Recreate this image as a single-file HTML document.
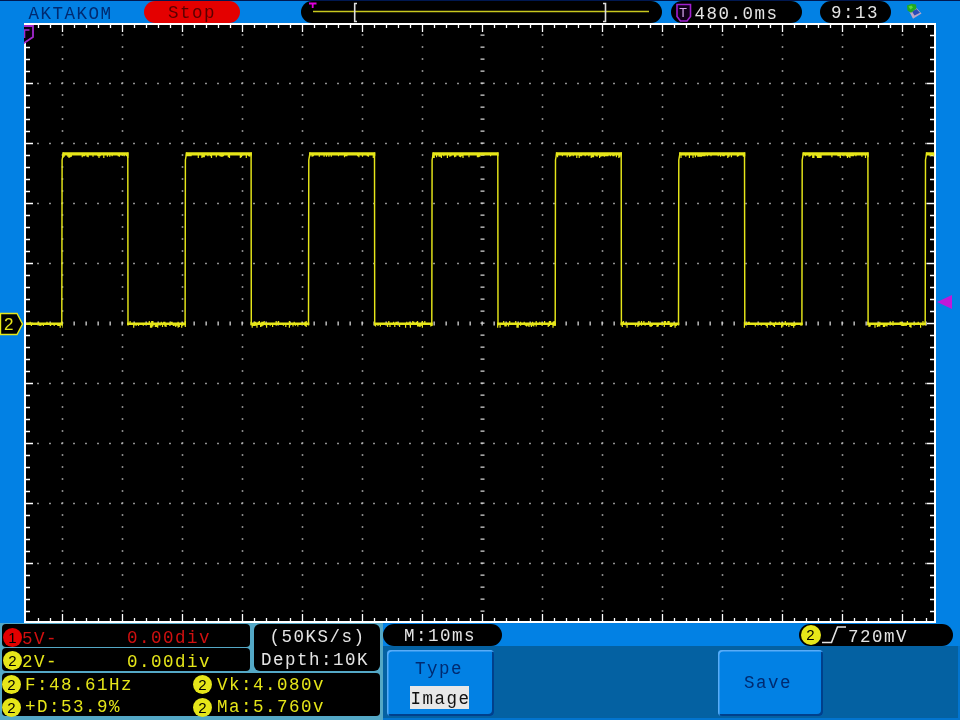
<!DOCTYPE html>
<html lang="en">
<head>
<meta charset="utf-8">
<title>AKTAKOM oscilloscope</title>
<style>
html,body{margin:0;padding:0;}
body{width:960px;height:720px;overflow:hidden;background:#0281e4;position:relative;}
#scr{position:absolute;left:0;top:0;width:960px;height:720px;overflow:hidden;will-change:transform;filter:blur(0.4px);
 font-family:"Liberation Mono","DejaVu Sans Mono",monospace;font-size:17.5px;letter-spacing:1.5px;line-height:20px;}
.abs{position:absolute;}
.plot{position:absolute;left:0;top:0;}
.t{position:absolute;white-space:pre;height:20px;}
.pill{position:absolute;background:#000;border-radius:11px;}
.box{position:absolute;background:#000;border-radius:4px;}
.circ{position:absolute;width:19px;height:19px;border-radius:50%;background:#e6e619;color:#000;
 font-family:"Liberation Sans",sans-serif;font-size:15px;letter-spacing:0;line-height:19px;text-align:center;}
.y{color:#e6e619;} .w{color:#e4e4e4;} .r{color:#d01010;} .n{color:#002a70;}
.btn{position:absolute;background:#0281e4;border-radius:4px;box-shadow:inset 1.5px 1.5px 0 #58acf8, inset -2px -2px 0 #00408c;}
</style>
</head>
<body>
<div id="scr">
<div class="abs" style="left:0;top:0;width:960px;height:1.2px;background:#001850;"></div>
<svg class="plot" width="960" height="720" viewBox="0 0 960 720"><rect x="24" y="23" width="912" height="600" fill="#000"/><line x1="37.2" y1="83.5" x2="934" y2="83.5" stroke="#b4b4b4" stroke-width="1.6" stroke-dasharray="1.6 10.4"/><line x1="37.2" y1="143.5" x2="934" y2="143.5" stroke="#b4b4b4" stroke-width="1.6" stroke-dasharray="1.6 10.4"/><line x1="37.2" y1="203.5" x2="934" y2="203.5" stroke="#b4b4b4" stroke-width="1.6" stroke-dasharray="1.6 10.4"/><line x1="37.2" y1="263.5" x2="934" y2="263.5" stroke="#b4b4b4" stroke-width="1.6" stroke-dasharray="1.6 10.4"/><line x1="37.2" y1="383.5" x2="934" y2="383.5" stroke="#b4b4b4" stroke-width="1.6" stroke-dasharray="1.6 10.4"/><line x1="37.2" y1="443.5" x2="934" y2="443.5" stroke="#b4b4b4" stroke-width="1.6" stroke-dasharray="1.6 10.4"/><line x1="37.2" y1="503.5" x2="934" y2="503.5" stroke="#b4b4b4" stroke-width="1.6" stroke-dasharray="1.6 10.4"/><line x1="37.2" y1="563.5" x2="934" y2="563.5" stroke="#b4b4b4" stroke-width="1.6" stroke-dasharray="1.6 10.4"/><line x1="62.5" y1="34.2" x2="62.5" y2="620" stroke="#b4b4b4" stroke-width="1.6" stroke-dasharray="1.6 10.4"/><line x1="122.5" y1="34.2" x2="122.5" y2="620" stroke="#b4b4b4" stroke-width="1.6" stroke-dasharray="1.6 10.4"/><line x1="182.5" y1="34.2" x2="182.5" y2="620" stroke="#b4b4b4" stroke-width="1.6" stroke-dasharray="1.6 10.4"/><line x1="242.5" y1="34.2" x2="242.5" y2="620" stroke="#b4b4b4" stroke-width="1.6" stroke-dasharray="1.6 10.4"/><line x1="302.5" y1="34.2" x2="302.5" y2="620" stroke="#b4b4b4" stroke-width="1.6" stroke-dasharray="1.6 10.4"/><line x1="362.5" y1="34.2" x2="362.5" y2="620" stroke="#b4b4b4" stroke-width="1.6" stroke-dasharray="1.6 10.4"/><line x1="422.5" y1="34.2" x2="422.5" y2="620" stroke="#b4b4b4" stroke-width="1.6" stroke-dasharray="1.6 10.4"/><line x1="542.5" y1="34.2" x2="542.5" y2="620" stroke="#b4b4b4" stroke-width="1.6" stroke-dasharray="1.6 10.4"/><line x1="602.5" y1="34.2" x2="602.5" y2="620" stroke="#b4b4b4" stroke-width="1.6" stroke-dasharray="1.6 10.4"/><line x1="662.5" y1="34.2" x2="662.5" y2="620" stroke="#b4b4b4" stroke-width="1.6" stroke-dasharray="1.6 10.4"/><line x1="722.5" y1="34.2" x2="722.5" y2="620" stroke="#b4b4b4" stroke-width="1.6" stroke-dasharray="1.6 10.4"/><line x1="782.5" y1="34.2" x2="782.5" y2="620" stroke="#b4b4b4" stroke-width="1.6" stroke-dasharray="1.6 10.4"/><line x1="842.5" y1="34.2" x2="842.5" y2="620" stroke="#b4b4b4" stroke-width="1.6" stroke-dasharray="1.6 10.4"/><line x1="902.5" y1="34.2" x2="902.5" y2="620" stroke="#b4b4b4" stroke-width="1.6" stroke-dasharray="1.6 10.4"/><line x1="37.5" y1="323.5" x2="934" y2="323.5" stroke="#d8d8d8" stroke-width="4" stroke-dasharray="1.3 10.7"/><line x1="482.5" y1="34.5" x2="482.5" y2="620" stroke="#d8d8d8" stroke-width="4" stroke-dasharray="1.3 10.7"/><rect x="25" y="24" width="910" height="598" fill="none" stroke="#fff" stroke-width="2"/><path d="M38.5 25v3 M38.5 621v-3 M50.5 25v3 M50.5 621v-3 M62.5 25v7 M62.5 621v-7 M74.5 25v3 M74.5 621v-3 M86.5 25v3 M86.5 621v-3 M98.5 25v3 M98.5 621v-3 M110.5 25v3 M110.5 621v-3 M122.5 25v7 M122.5 621v-7 M134.5 25v3 M134.5 621v-3 M146.5 25v3 M146.5 621v-3 M158.5 25v3 M158.5 621v-3 M170.5 25v3 M170.5 621v-3 M182.5 25v7 M182.5 621v-7 M194.5 25v3 M194.5 621v-3 M206.5 25v3 M206.5 621v-3 M218.5 25v3 M218.5 621v-3 M230.5 25v3 M230.5 621v-3 M242.5 25v7 M242.5 621v-7 M254.5 25v3 M254.5 621v-3 M266.5 25v3 M266.5 621v-3 M278.5 25v3 M278.5 621v-3 M290.5 25v3 M290.5 621v-3 M302.5 25v7 M302.5 621v-7 M314.5 25v3 M314.5 621v-3 M326.5 25v3 M326.5 621v-3 M338.5 25v3 M338.5 621v-3 M350.5 25v3 M350.5 621v-3 M362.5 25v7 M362.5 621v-7 M374.5 25v3 M374.5 621v-3 M386.5 25v3 M386.5 621v-3 M398.5 25v3 M398.5 621v-3 M410.5 25v3 M410.5 621v-3 M422.5 25v7 M422.5 621v-7 M434.5 25v3 M434.5 621v-3 M446.5 25v3 M446.5 621v-3 M458.5 25v3 M458.5 621v-3 M470.5 25v3 M470.5 621v-3 M482.5 25v7 M482.5 621v-7 M494.5 25v3 M494.5 621v-3 M506.5 25v3 M506.5 621v-3 M518.5 25v3 M518.5 621v-3 M530.5 25v3 M530.5 621v-3 M542.5 25v7 M542.5 621v-7 M554.5 25v3 M554.5 621v-3 M566.5 25v3 M566.5 621v-3 M578.5 25v3 M578.5 621v-3 M590.5 25v3 M590.5 621v-3 M602.5 25v7 M602.5 621v-7 M614.5 25v3 M614.5 621v-3 M626.5 25v3 M626.5 621v-3 M638.5 25v3 M638.5 621v-3 M650.5 25v3 M650.5 621v-3 M662.5 25v7 M662.5 621v-7 M674.5 25v3 M674.5 621v-3 M686.5 25v3 M686.5 621v-3 M698.5 25v3 M698.5 621v-3 M710.5 25v3 M710.5 621v-3 M722.5 25v7 M722.5 621v-7 M734.5 25v3 M734.5 621v-3 M746.5 25v3 M746.5 621v-3 M758.5 25v3 M758.5 621v-3 M770.5 25v3 M770.5 621v-3 M782.5 25v7 M782.5 621v-7 M794.5 25v3 M794.5 621v-3 M806.5 25v3 M806.5 621v-3 M818.5 25v3 M818.5 621v-3 M830.5 25v3 M830.5 621v-3 M842.5 25v7 M842.5 621v-7 M854.5 25v3 M854.5 621v-3 M866.5 25v3 M866.5 621v-3 M878.5 25v3 M878.5 621v-3 M890.5 25v3 M890.5 621v-3 M902.5 25v7 M902.5 621v-7 M914.5 25v3 M914.5 621v-3 M926.5 25v3 M926.5 621v-3 M26 35.5h4 M934 35.5h-4 M26 47.5h4 M934 47.5h-4 M26 59.5h4 M934 59.5h-4 M26 71.5h4 M934 71.5h-4 M26 83.5h7 M934 83.5h-7 M26 95.5h4 M934 95.5h-4 M26 107.5h4 M934 107.5h-4 M26 119.5h4 M934 119.5h-4 M26 131.5h4 M934 131.5h-4 M26 143.5h7 M934 143.5h-7 M26 155.5h4 M934 155.5h-4 M26 167.5h4 M934 167.5h-4 M26 179.5h4 M934 179.5h-4 M26 191.5h4 M934 191.5h-4 M26 203.5h7 M934 203.5h-7 M26 215.5h4 M934 215.5h-4 M26 227.5h4 M934 227.5h-4 M26 239.5h4 M934 239.5h-4 M26 251.5h4 M934 251.5h-4 M26 263.5h7 M934 263.5h-7 M26 275.5h4 M934 275.5h-4 M26 287.5h4 M934 287.5h-4 M26 299.5h4 M934 299.5h-4 M26 311.5h4 M934 311.5h-4 M26 323.5h7 M934 323.5h-7 M26 335.5h4 M934 335.5h-4 M26 347.5h4 M934 347.5h-4 M26 359.5h4 M934 359.5h-4 M26 371.5h4 M934 371.5h-4 M26 383.5h7 M934 383.5h-7 M26 395.5h4 M934 395.5h-4 M26 407.5h4 M934 407.5h-4 M26 419.5h4 M934 419.5h-4 M26 431.5h4 M934 431.5h-4 M26 443.5h7 M934 443.5h-7 M26 455.5h4 M934 455.5h-4 M26 467.5h4 M934 467.5h-4 M26 479.5h4 M934 479.5h-4 M26 491.5h4 M934 491.5h-4 M26 503.5h7 M934 503.5h-7 M26 515.5h4 M934 515.5h-4 M26 527.5h4 M934 527.5h-4 M26 539.5h4 M934 539.5h-4 M26 551.5h4 M934 551.5h-4 M26 563.5h7 M934 563.5h-7 M26 575.5h4 M934 575.5h-4 M26 587.5h4 M934 587.5h-4 M26 599.5h4 M934 599.5h-4 M26 611.5h4 M934 611.5h-4" stroke="#fff" stroke-width="1.3" fill="none"/><path d="M26.0 322.6 L27.2 322.6 L27.2 322.6 L28.4 322.6 L28.4 322.6 L29.6 322.6 L29.6 321.8 L30.8 321.8 L30.8 322.6 L32.0 322.6 L32.0 322.6 L33.2 322.6 L33.2 322.6 L34.4 322.6 L34.4 322.6 L35.6 322.6 L35.6 322.6 L36.8 322.6 L36.8 322.6 L38.0 322.6 L38.0 321.8 L39.2 321.8 L39.2 322.6 L40.4 322.6 L40.4 322.6 L41.6 322.6 L41.6 322.6 L42.8 322.6 L42.8 322.6 L44.0 322.6 L44.0 322.6 L45.2 322.6 L45.2 322.6 L46.4 322.6 L46.4 321.8 L47.6 321.8 L47.6 322.6 L48.8 322.6 L48.8 322.6 L50.0 322.6 L50.0 322.6 L51.2 322.6 L51.2 322.6 L52.4 322.6 L52.4 322.6 L53.6 322.6 L53.6 322.6 L54.8 322.6 L54.8 322.6 L56.0 322.6 L56.0 322.6 L57.2 322.6 L57.2 322.6 L58.4 322.6 L58.4 322.6 L59.6 322.6 L59.6 322.6 L60.8 322.6 L60.8 321.8 L62.0 321.8 L62.0 322.6 L62.6 322.6 L62.6 327.8 L62.0 327.8 L62.0 325.1 L60.8 325.1 L60.8 327.8 L59.6 327.8 L59.6 325.9 L58.4 325.9 L58.4 325.9 L57.2 325.9 L57.2 325.1 L56.0 325.1 L56.0 325.1 L54.8 325.1 L54.8 325.9 L53.6 325.9 L53.6 325.1 L52.4 325.1 L52.4 325.1 L51.2 325.1 L51.2 325.9 L50.0 325.9 L50.0 325.1 L48.8 325.1 L48.8 325.1 L47.6 325.1 L47.6 325.1 L46.4 325.1 L46.4 325.1 L45.2 325.1 L45.2 325.1 L44.0 325.1 L44.0 325.9 L42.8 325.9 L42.8 325.1 L41.6 325.1 L41.6 325.8 L40.4 325.8 L40.4 325.9 L39.2 325.9 L39.2 325.1 L38.0 325.1 L38.0 325.1 L36.8 325.1 L36.8 325.1 L35.6 325.1 L35.6 325.1 L34.4 325.1 L34.4 325.1 L33.2 325.1 L33.2 325.1 L32.0 325.1 L32.0 325.9 L30.8 325.9 L30.8 325.1 L29.6 325.1 L29.6 325.1 L28.4 325.1 L28.4 325.1 L27.2 325.1 L27.2 325.1 L26.0 325.1Z M62.4 152.3 L63.6 152.3 L63.6 152.3 L64.8 152.3 L64.8 152.3 L66.0 152.3 L66.0 152.3 L67.2 152.3 L67.2 152.3 L68.4 152.3 L68.4 152.3 L69.6 152.3 L69.6 152.3 L70.8 152.3 L70.8 152.3 L72.0 152.3 L72.0 152.3 L73.2 152.3 L73.2 152.3 L74.4 152.3 L74.4 152.3 L75.6 152.3 L75.6 152.3 L76.8 152.3 L76.8 152.3 L78.0 152.3 L78.0 152.3 L79.2 152.3 L79.2 152.3 L80.4 152.3 L80.4 152.3 L81.6 152.3 L81.6 152.3 L82.8 152.3 L82.8 152.3 L84.0 152.3 L84.0 152.3 L85.2 152.3 L85.2 152.3 L86.4 152.3 L86.4 152.3 L87.6 152.3 L87.6 152.3 L88.8 152.3 L88.8 152.3 L90.0 152.3 L90.0 152.3 L91.2 152.3 L91.2 152.3 L92.4 152.3 L92.4 152.3 L93.6 152.3 L93.6 152.3 L94.8 152.3 L94.8 152.3 L96.0 152.3 L96.0 152.3 L97.2 152.3 L97.2 152.3 L98.4 152.3 L98.4 152.3 L99.6 152.3 L99.6 152.3 L100.8 152.3 L100.8 152.3 L102.0 152.3 L102.0 152.3 L103.2 152.3 L103.2 152.3 L104.4 152.3 L104.4 152.3 L105.6 152.3 L105.6 152.3 L106.8 152.3 L106.8 152.3 L108.0 152.3 L108.0 152.3 L109.2 152.3 L109.2 152.3 L110.4 152.3 L110.4 152.3 L111.6 152.3 L111.6 152.3 L112.8 152.3 L112.8 152.3 L114.0 152.3 L114.0 152.3 L115.2 152.3 L115.2 152.3 L116.4 152.3 L116.4 152.3 L117.6 152.3 L117.6 152.3 L118.8 152.3 L118.8 152.3 L120.0 152.3 L120.0 152.3 L121.2 152.3 L121.2 152.3 L122.4 152.3 L122.4 152.3 L123.6 152.3 L123.6 152.3 L124.8 152.3 L124.8 152.3 L126.0 152.3 L126.0 152.3 L127.2 152.3 L127.2 152.3 L128.4 152.3 L128.4 152.3 L128.6 152.3 L128.6 155.5 L128.4 155.5 L128.4 158.1 L127.2 158.1 L127.2 156.3 L126.0 156.3 L126.0 155.5 L124.8 155.5 L124.8 156.3 L123.6 156.3 L123.6 155.5 L122.4 155.5 L122.4 155.5 L121.2 155.5 L121.2 155.5 L120.0 155.5 L120.0 156.8 L118.8 156.8 L118.8 156.3 L117.6 156.3 L117.6 155.5 L116.4 155.5 L116.4 155.5 L115.2 155.5 L115.2 155.5 L114.0 155.5 L114.0 155.5 L112.8 155.5 L112.8 156.2 L111.6 156.2 L111.6 155.5 L110.4 155.5 L110.4 156.8 L109.2 156.8 L109.2 155.5 L108.0 155.5 L108.0 156.8 L106.8 156.8 L106.8 155.5 L105.6 155.5 L105.6 155.5 L104.4 155.5 L104.4 158.1 L103.2 158.1 L103.2 155.5 L102.0 155.5 L102.0 155.5 L100.8 155.5 L100.8 156.2 L99.6 156.2 L99.6 158.1 L98.4 158.1 L98.4 156.3 L97.2 156.3 L97.2 155.5 L96.0 155.5 L96.0 155.5 L94.8 155.5 L94.8 155.5 L93.6 155.5 L93.6 156.8 L92.4 156.8 L92.4 155.5 L91.2 155.5 L91.2 155.5 L90.0 155.5 L90.0 155.5 L88.8 155.5 L88.8 157.3 L87.6 157.3 L87.6 156.8 L86.4 156.8 L86.4 155.5 L85.2 155.5 L85.2 156.3 L84.0 156.3 L84.0 156.3 L82.8 156.3 L82.8 157.3 L81.6 157.3 L81.6 155.5 L80.4 155.5 L80.4 155.5 L79.2 155.5 L79.2 155.5 L78.0 155.5 L78.0 155.5 L76.8 155.5 L76.8 155.5 L75.6 155.5 L75.6 155.5 L74.4 155.5 L74.4 155.5 L73.2 155.5 L73.2 155.5 L72.0 155.5 L72.0 156.8 L70.8 156.8 L70.8 157.3 L69.6 157.3 L69.6 158.1 L68.4 158.1 L68.4 156.8 L67.2 156.8 L67.2 155.5 L66.0 155.5 L66.0 155.5 L64.8 155.5 L64.8 156.8 L63.6 156.8 L63.6 158.1 L62.4 158.1Z M127.1 322.6 L128.3 322.6 L128.3 322.6 L129.5 322.6 L129.5 321.0 L130.7 321.0 L130.7 322.6 L131.9 322.6 L131.9 322.6 L133.1 322.6 L133.1 322.6 L134.3 322.6 L134.3 322.6 L135.5 322.6 L135.5 322.6 L136.7 322.6 L136.7 322.6 L137.9 322.6 L137.9 322.6 L139.1 322.6 L139.1 322.6 L140.3 322.6 L140.3 322.6 L141.5 322.6 L141.5 322.6 L142.7 322.6 L142.7 322.6 L143.9 322.6 L143.9 322.6 L145.1 322.6 L145.1 322.6 L146.3 322.6 L146.3 322.6 L147.5 322.6 L147.5 322.6 L148.7 322.6 L148.7 321.0 L149.9 321.0 L149.9 322.6 L151.1 322.6 L151.1 321.0 L152.3 321.0 L152.3 321.0 L153.5 321.0 L153.5 322.6 L154.7 322.6 L154.7 322.6 L155.9 322.6 L155.9 322.6 L157.1 322.6 L157.1 322.6 L158.3 322.6 L158.3 322.6 L159.5 322.6 L159.5 322.6 L160.7 322.6 L160.7 321.8 L161.9 321.8 L161.9 322.6 L163.1 322.6 L163.1 321.8 L164.3 321.8 L164.3 321.8 L165.5 321.8 L165.5 322.6 L166.7 322.6 L166.7 322.6 L167.9 322.6 L167.9 322.6 L169.1 322.6 L169.1 322.6 L170.3 322.6 L170.3 321.8 L171.5 321.8 L171.5 321.8 L172.7 321.8 L172.7 322.6 L173.9 322.6 L173.9 322.6 L175.1 322.6 L175.1 322.6 L176.3 322.6 L176.3 322.6 L177.5 322.6 L177.5 321.8 L178.7 321.8 L178.7 322.6 L179.9 322.6 L179.9 322.6 L181.1 322.6 L181.1 322.6 L182.3 322.6 L182.3 322.6 L183.5 322.6 L183.5 322.6 L184.7 322.6 L184.7 321.0 L185.9 321.0 L185.9 322.6 L185.9 322.6 L185.9 325.1 L185.9 325.1 L185.9 327.0 L184.7 327.0 L184.7 325.1 L183.5 325.1 L183.5 325.8 L182.3 325.8 L182.3 327.8 L181.1 327.8 L181.1 325.1 L179.9 325.1 L179.9 327.0 L178.7 327.0 L178.7 327.8 L177.5 327.8 L177.5 325.8 L176.3 325.8 L176.3 327.0 L175.1 327.0 L175.1 325.8 L173.9 325.8 L173.9 325.9 L172.7 325.9 L172.7 325.1 L171.5 325.1 L171.5 325.1 L170.3 325.1 L170.3 325.8 L169.1 325.8 L169.1 325.1 L167.9 325.1 L167.9 325.1 L166.7 325.1 L166.7 327.0 L165.5 327.0 L165.5 326.4 L164.3 326.4 L164.3 325.1 L163.1 325.1 L163.1 327.0 L161.9 327.0 L161.9 325.1 L160.7 325.1 L160.7 325.8 L159.5 325.8 L159.5 325.1 L158.3 325.1 L158.3 327.8 L157.1 327.8 L157.1 327.0 L155.9 327.0 L155.9 327.0 L154.7 327.0 L154.7 325.1 L153.5 325.1 L153.5 326.4 L152.3 326.4 L152.3 327.8 L151.1 327.8 L151.1 327.8 L149.9 327.8 L149.9 325.1 L148.7 325.1 L148.7 325.1 L147.5 325.1 L147.5 325.1 L146.3 325.1 L146.3 325.1 L145.1 325.1 L145.1 325.1 L143.9 325.1 L143.9 325.8 L142.7 325.8 L142.7 325.1 L141.5 325.1 L141.5 325.1 L140.3 325.1 L140.3 325.1 L139.1 325.1 L139.1 325.9 L137.9 325.9 L137.9 325.1 L136.7 325.1 L136.7 325.9 L135.5 325.9 L135.5 325.1 L134.3 325.1 L134.3 327.8 L133.1 327.8 L133.1 325.1 L131.9 325.1 L131.9 325.1 L130.7 325.1 L130.7 325.1 L129.5 325.1 L129.5 325.1 L128.3 325.1 L128.3 325.1 L127.1 325.1Z M185.7 152.3 L186.9 152.3 L186.9 152.3 L188.1 152.3 L188.1 152.3 L189.3 152.3 L189.3 152.3 L190.5 152.3 L190.5 152.3 L191.7 152.3 L191.7 152.3 L192.9 152.3 L192.9 152.3 L194.1 152.3 L194.1 152.3 L195.3 152.3 L195.3 152.3 L196.5 152.3 L196.5 152.3 L197.7 152.3 L197.7 152.3 L198.9 152.3 L198.9 152.3 L200.1 152.3 L200.1 152.3 L201.3 152.3 L201.3 152.3 L202.5 152.3 L202.5 152.3 L203.7 152.3 L203.7 152.3 L204.9 152.3 L204.9 152.3 L206.1 152.3 L206.1 152.3 L207.3 152.3 L207.3 152.3 L208.5 152.3 L208.5 152.3 L209.7 152.3 L209.7 152.3 L210.9 152.3 L210.9 152.3 L212.1 152.3 L212.1 152.3 L213.3 152.3 L213.3 152.3 L214.5 152.3 L214.5 152.3 L215.7 152.3 L215.7 152.3 L216.9 152.3 L216.9 152.3 L218.1 152.3 L218.1 152.3 L219.3 152.3 L219.3 152.3 L220.5 152.3 L220.5 152.3 L221.7 152.3 L221.7 152.3 L222.9 152.3 L222.9 152.3 L224.1 152.3 L224.1 152.3 L225.3 152.3 L225.3 152.3 L226.5 152.3 L226.5 152.3 L227.7 152.3 L227.7 152.3 L228.9 152.3 L228.9 152.3 L230.1 152.3 L230.1 152.3 L231.3 152.3 L231.3 152.3 L232.5 152.3 L232.5 152.3 L233.7 152.3 L233.7 152.3 L234.9 152.3 L234.9 152.3 L236.1 152.3 L236.1 152.3 L237.3 152.3 L237.3 152.3 L238.5 152.3 L238.5 152.3 L239.7 152.3 L239.7 152.3 L240.9 152.3 L240.9 152.3 L242.1 152.3 L242.1 152.3 L243.3 152.3 L243.3 152.3 L244.5 152.3 L244.5 152.3 L245.7 152.3 L245.7 152.3 L246.9 152.3 L246.9 152.3 L248.1 152.3 L248.1 152.3 L249.3 152.3 L249.3 152.3 L250.5 152.3 L250.5 152.3 L251.7 152.3 L251.7 152.3 L251.9 152.3 L251.9 158.1 L251.7 158.1 L251.7 155.5 L250.5 155.5 L250.5 156.8 L249.3 156.8 L249.3 156.2 L248.1 156.2 L248.1 155.5 L246.9 155.5 L246.9 158.1 L245.7 158.1 L245.7 155.5 L244.5 155.5 L244.5 155.5 L243.3 155.5 L243.3 155.5 L242.1 155.5 L242.1 157.3 L240.9 157.3 L240.9 158.1 L239.7 158.1 L239.7 155.5 L238.5 155.5 L238.5 155.5 L237.3 155.5 L237.3 155.5 L236.1 155.5 L236.1 155.5 L234.9 155.5 L234.9 155.5 L233.7 155.5 L233.7 155.5 L232.5 155.5 L232.5 155.5 L231.3 155.5 L231.3 155.5 L230.1 155.5 L230.1 158.1 L228.9 158.1 L228.9 157.3 L227.7 157.3 L227.7 155.5 L226.5 155.5 L226.5 155.5 L225.3 155.5 L225.3 155.5 L224.1 155.5 L224.1 156.2 L222.9 156.2 L222.9 156.8 L221.7 156.8 L221.7 156.8 L220.5 156.8 L220.5 156.2 L219.3 156.2 L219.3 155.5 L218.1 155.5 L218.1 155.5 L216.9 155.5 L216.9 157.3 L215.7 157.3 L215.7 155.5 L214.5 155.5 L214.5 155.5 L213.3 155.5 L213.3 155.5 L212.1 155.5 L212.1 158.1 L210.9 158.1 L210.9 156.3 L209.7 156.3 L209.7 155.5 L208.5 155.5 L208.5 156.3 L207.3 156.3 L207.3 155.5 L206.1 155.5 L206.1 155.5 L204.9 155.5 L204.9 157.3 L203.7 157.3 L203.7 157.3 L202.5 157.3 L202.5 158.1 L201.3 158.1 L201.3 155.5 L200.1 155.5 L200.1 155.5 L198.9 155.5 L198.9 158.1 L197.7 158.1 L197.7 155.5 L196.5 155.5 L196.5 155.5 L195.3 155.5 L195.3 155.5 L194.1 155.5 L194.1 155.5 L192.9 155.5 L192.9 155.5 L191.7 155.5 L191.7 156.3 L190.5 156.3 L190.5 156.2 L189.3 156.2 L189.3 156.2 L188.1 156.2 L188.1 156.2 L186.9 156.2 L186.9 156.2 L185.7 156.2Z M250.4 321.8 L251.6 321.8 L251.6 322.6 L252.8 322.6 L252.8 322.6 L254.0 322.6 L254.0 321.8 L255.2 321.8 L255.2 321.8 L256.4 321.8 L256.4 322.6 L257.6 322.6 L257.6 321.8 L258.8 321.8 L258.8 321.0 L260.0 321.0 L260.0 322.6 L261.2 322.6 L261.2 321.8 L262.4 321.8 L262.4 321.8 L263.6 321.8 L263.6 321.0 L264.8 321.0 L264.8 322.6 L266.0 322.6 L266.0 322.6 L267.2 322.6 L267.2 322.6 L268.4 322.6 L268.4 322.6 L269.6 322.6 L269.6 322.6 L270.8 322.6 L270.8 322.6 L272.0 322.6 L272.0 322.6 L273.2 322.6 L273.2 322.6 L274.4 322.6 L274.4 322.6 L275.6 322.6 L275.6 321.0 L276.8 321.0 L276.8 322.6 L278.0 322.6 L278.0 321.0 L279.2 321.0 L279.2 322.6 L280.4 322.6 L280.4 322.6 L281.6 322.6 L281.6 322.6 L282.8 322.6 L282.8 322.6 L284.0 322.6 L284.0 322.6 L285.2 322.6 L285.2 322.6 L286.4 322.6 L286.4 322.6 L287.6 322.6 L287.6 322.6 L288.8 322.6 L288.8 321.0 L290.0 321.0 L290.0 322.6 L291.2 322.6 L291.2 322.6 L292.4 322.6 L292.4 322.6 L293.6 322.6 L293.6 321.8 L294.8 321.8 L294.8 322.6 L296.0 322.6 L296.0 322.6 L297.2 322.6 L297.2 322.6 L298.4 322.6 L298.4 322.6 L299.6 322.6 L299.6 322.6 L300.8 322.6 L300.8 322.6 L302.0 322.6 L302.0 322.6 L303.2 322.6 L303.2 322.6 L304.4 322.6 L304.4 321.8 L305.6 321.8 L305.6 321.0 L306.8 321.0 L306.8 322.6 L308.0 322.6 L308.0 322.6 L309.2 322.6 L309.2 322.6 L309.3 322.6 L309.3 325.1 L309.2 325.1 L309.2 325.1 L308.0 325.1 L308.0 325.1 L306.8 325.1 L306.8 327.0 L305.6 327.0 L305.6 325.9 L304.4 325.9 L304.4 325.1 L303.2 325.1 L303.2 325.1 L302.0 325.1 L302.0 325.1 L300.8 325.1 L300.8 325.1 L299.6 325.1 L299.6 325.1 L298.4 325.1 L298.4 326.4 L297.2 326.4 L297.2 325.1 L296.0 325.1 L296.0 325.8 L294.8 325.8 L294.8 325.1 L293.6 325.1 L293.6 326.4 L292.4 326.4 L292.4 325.1 L291.2 325.1 L291.2 325.1 L290.0 325.1 L290.0 327.8 L288.8 327.8 L288.8 325.1 L287.6 325.1 L287.6 325.1 L286.4 325.1 L286.4 327.0 L285.2 327.0 L285.2 325.1 L284.0 325.1 L284.0 325.8 L282.8 325.8 L282.8 325.1 L281.6 325.1 L281.6 325.1 L280.4 325.1 L280.4 325.1 L279.2 325.1 L279.2 325.1 L278.0 325.1 L278.0 325.1 L276.8 325.1 L276.8 325.8 L275.6 325.8 L275.6 325.1 L274.4 325.1 L274.4 325.1 L273.2 325.1 L273.2 327.0 L272.0 327.0 L272.0 325.1 L270.8 325.1 L270.8 325.8 L269.6 325.8 L269.6 325.1 L268.4 325.1 L268.4 325.1 L267.2 325.1 L267.2 327.8 L266.0 327.8 L266.0 325.1 L264.8 325.1 L264.8 325.1 L263.6 325.1 L263.6 325.8 L262.4 325.8 L262.4 326.4 L261.2 326.4 L261.2 327.0 L260.0 327.0 L260.0 325.1 L258.8 325.1 L258.8 325.1 L257.6 325.1 L257.6 327.8 L256.4 327.8 L256.4 325.8 L255.2 325.8 L255.2 325.9 L254.0 325.9 L254.0 325.9 L252.8 325.9 L252.8 327.8 L251.6 327.8 L251.6 325.1 L250.4 325.1Z M309.1 152.3 L310.3 152.3 L310.3 152.3 L311.5 152.3 L311.5 152.3 L312.7 152.3 L312.7 152.3 L313.9 152.3 L313.9 152.3 L315.1 152.3 L315.1 152.3 L316.3 152.3 L316.3 152.3 L317.5 152.3 L317.5 152.3 L318.7 152.3 L318.7 152.3 L319.9 152.3 L319.9 152.3 L321.1 152.3 L321.1 152.3 L322.3 152.3 L322.3 152.3 L323.5 152.3 L323.5 152.3 L324.7 152.3 L324.7 152.3 L325.9 152.3 L325.9 152.3 L327.1 152.3 L327.1 152.3 L328.3 152.3 L328.3 152.3 L329.5 152.3 L329.5 152.3 L330.7 152.3 L330.7 152.3 L331.9 152.3 L331.9 152.3 L333.1 152.3 L333.1 152.3 L334.3 152.3 L334.3 152.3 L335.5 152.3 L335.5 152.3 L336.7 152.3 L336.7 152.3 L337.9 152.3 L337.9 152.3 L339.1 152.3 L339.1 152.3 L340.3 152.3 L340.3 152.3 L341.5 152.3 L341.5 152.3 L342.7 152.3 L342.7 152.3 L343.9 152.3 L343.9 152.3 L345.1 152.3 L345.1 152.3 L346.3 152.3 L346.3 152.3 L347.5 152.3 L347.5 152.3 L348.7 152.3 L348.7 152.3 L349.9 152.3 L349.9 152.3 L351.1 152.3 L351.1 152.3 L352.3 152.3 L352.3 152.3 L353.5 152.3 L353.5 152.3 L354.7 152.3 L354.7 152.3 L355.9 152.3 L355.9 152.3 L357.1 152.3 L357.1 152.3 L358.3 152.3 L358.3 152.3 L359.5 152.3 L359.5 152.3 L360.7 152.3 L360.7 152.3 L361.9 152.3 L361.9 152.3 L363.1 152.3 L363.1 152.3 L364.3 152.3 L364.3 152.3 L365.5 152.3 L365.5 152.3 L366.7 152.3 L366.7 152.3 L367.9 152.3 L367.9 152.3 L369.1 152.3 L369.1 152.3 L370.3 152.3 L370.3 152.3 L371.5 152.3 L371.5 152.3 L372.7 152.3 L372.7 152.3 L373.9 152.3 L373.9 152.3 L375.1 152.3 L375.1 152.3 L375.3 152.3 L375.3 156.2 L375.1 156.2 L375.1 155.5 L373.9 155.5 L373.9 158.1 L372.7 158.1 L372.7 155.5 L371.5 155.5 L371.5 155.5 L370.3 155.5 L370.3 155.5 L369.1 155.5 L369.1 156.8 L367.9 156.8 L367.9 156.2 L366.7 156.2 L366.7 155.5 L365.5 155.5 L365.5 155.5 L364.3 155.5 L364.3 155.5 L363.1 155.5 L363.1 156.8 L361.9 156.8 L361.9 155.5 L360.7 155.5 L360.7 155.5 L359.5 155.5 L359.5 157.3 L358.3 157.3 L358.3 156.3 L357.1 156.3 L357.1 155.5 L355.9 155.5 L355.9 155.5 L354.7 155.5 L354.7 155.5 L353.5 155.5 L353.5 155.5 L352.3 155.5 L352.3 155.5 L351.1 155.5 L351.1 155.5 L349.9 155.5 L349.9 155.5 L348.7 155.5 L348.7 155.5 L347.5 155.5 L347.5 156.2 L346.3 156.2 L346.3 156.2 L345.1 156.2 L345.1 157.3 L343.9 157.3 L343.9 155.5 L342.7 155.5 L342.7 155.5 L341.5 155.5 L341.5 155.5 L340.3 155.5 L340.3 155.5 L339.1 155.5 L339.1 156.2 L337.9 156.2 L337.9 155.5 L336.7 155.5 L336.7 155.5 L335.5 155.5 L335.5 155.5 L334.3 155.5 L334.3 155.5 L333.1 155.5 L333.1 155.5 L331.9 155.5 L331.9 156.8 L330.7 156.8 L330.7 155.5 L329.5 155.5 L329.5 156.8 L328.3 156.8 L328.3 155.5 L327.1 155.5 L327.1 156.8 L325.9 156.8 L325.9 155.5 L324.7 155.5 L324.7 156.8 L323.5 156.8 L323.5 155.5 L322.3 155.5 L322.3 155.5 L321.1 155.5 L321.1 155.5 L319.9 155.5 L319.9 156.8 L318.7 156.8 L318.7 155.5 L317.5 155.5 L317.5 155.5 L316.3 155.5 L316.3 155.5 L315.1 155.5 L315.1 155.5 L313.9 155.5 L313.9 156.3 L312.7 156.3 L312.7 156.8 L311.5 156.8 L311.5 155.5 L310.3 155.5 L310.3 156.8 L309.1 156.8Z M373.8 321.8 L375.0 321.8 L375.0 322.6 L376.2 322.6 L376.2 322.6 L377.4 322.6 L377.4 322.6 L378.6 322.6 L378.6 322.6 L379.8 322.6 L379.8 322.6 L381.0 322.6 L381.0 322.6 L382.2 322.6 L382.2 322.6 L383.4 322.6 L383.4 322.6 L384.6 322.6 L384.6 322.6 L385.8 322.6 L385.8 322.6 L387.0 322.6 L387.0 322.6 L388.2 322.6 L388.2 321.0 L389.4 321.0 L389.4 322.6 L390.6 322.6 L390.6 322.6 L391.8 322.6 L391.8 322.6 L393.0 322.6 L393.0 321.8 L394.2 321.8 L394.2 322.6 L395.4 322.6 L395.4 321.8 L396.6 321.8 L396.6 321.8 L397.8 321.8 L397.8 322.6 L399.0 322.6 L399.0 322.6 L400.2 322.6 L400.2 322.6 L401.4 322.6 L401.4 322.6 L402.6 322.6 L402.6 322.6 L403.8 322.6 L403.8 322.6 L405.0 322.6 L405.0 322.6 L406.2 322.6 L406.2 321.8 L407.4 321.8 L407.4 322.6 L408.6 322.6 L408.6 321.8 L409.8 321.8 L409.8 322.6 L411.0 322.6 L411.0 322.6 L412.2 322.6 L412.2 321.0 L413.4 321.0 L413.4 321.8 L414.6 321.8 L414.6 322.6 L415.8 322.6 L415.8 321.8 L417.0 321.8 L417.0 321.0 L418.2 321.0 L418.2 322.6 L419.4 322.6 L419.4 322.6 L420.6 322.6 L420.6 322.6 L421.8 322.6 L421.8 321.0 L423.0 321.0 L423.0 322.6 L424.2 322.6 L424.2 321.0 L425.4 321.0 L425.4 322.6 L426.6 322.6 L426.6 322.6 L427.8 322.6 L427.8 322.6 L429.0 322.6 L429.0 322.6 L430.2 322.6 L430.2 322.6 L431.4 322.6 L431.4 322.6 L432.6 322.6 L432.6 322.6 L432.7 322.6 L432.7 325.1 L432.6 325.1 L432.6 325.9 L431.4 325.9 L431.4 326.4 L430.2 326.4 L430.2 325.1 L429.0 325.1 L429.0 325.1 L427.8 325.1 L427.8 325.1 L426.6 325.1 L426.6 325.1 L425.4 325.1 L425.4 325.1 L424.2 325.1 L424.2 325.1 L423.0 325.1 L423.0 327.8 L421.8 327.8 L421.8 325.8 L420.6 325.8 L420.6 327.0 L419.4 327.0 L419.4 326.4 L418.2 326.4 L418.2 326.4 L417.0 326.4 L417.0 325.1 L415.8 325.1 L415.8 325.1 L414.6 325.1 L414.6 325.1 L413.4 325.1 L413.4 325.1 L412.2 325.1 L412.2 325.1 L411.0 325.1 L411.0 327.8 L409.8 327.8 L409.8 325.1 L408.6 325.1 L408.6 325.1 L407.4 325.1 L407.4 325.1 L406.2 325.1 L406.2 327.8 L405.0 327.8 L405.0 325.1 L403.8 325.1 L403.8 325.1 L402.6 325.1 L402.6 325.1 L401.4 325.1 L401.4 325.1 L400.2 325.1 L400.2 327.0 L399.0 327.0 L399.0 325.1 L397.8 325.1 L397.8 325.1 L396.6 325.1 L396.6 325.1 L395.4 325.1 L395.4 327.0 L394.2 327.0 L394.2 325.1 L393.0 325.1 L393.0 325.1 L391.8 325.1 L391.8 325.1 L390.6 325.1 L390.6 327.0 L389.4 327.0 L389.4 325.1 L388.2 325.1 L388.2 327.0 L387.0 327.0 L387.0 325.1 L385.8 325.1 L385.8 325.1 L384.6 325.1 L384.6 325.1 L383.4 325.1 L383.4 325.1 L382.2 325.1 L382.2 325.1 L381.0 325.1 L381.0 326.4 L379.8 326.4 L379.8 325.1 L378.6 325.1 L378.6 325.9 L377.4 325.9 L377.4 325.1 L376.2 325.1 L376.2 326.4 L375.0 326.4 L375.0 325.1 L373.8 325.1Z M432.4 152.3 L433.6 152.3 L433.6 152.3 L434.8 152.3 L434.8 152.3 L436.0 152.3 L436.0 152.3 L437.2 152.3 L437.2 152.3 L438.4 152.3 L438.4 152.3 L439.6 152.3 L439.6 152.3 L440.8 152.3 L440.8 152.3 L442.0 152.3 L442.0 152.3 L443.2 152.3 L443.2 152.3 L444.4 152.3 L444.4 152.3 L445.6 152.3 L445.6 152.3 L446.8 152.3 L446.8 152.3 L448.0 152.3 L448.0 152.3 L449.2 152.3 L449.2 152.3 L450.4 152.3 L450.4 152.3 L451.6 152.3 L451.6 152.3 L452.8 152.3 L452.8 152.3 L454.0 152.3 L454.0 152.3 L455.2 152.3 L455.2 152.3 L456.4 152.3 L456.4 152.3 L457.6 152.3 L457.6 152.3 L458.8 152.3 L458.8 152.3 L460.0 152.3 L460.0 152.3 L461.2 152.3 L461.2 152.3 L462.4 152.3 L462.4 152.3 L463.6 152.3 L463.6 152.3 L464.8 152.3 L464.8 152.3 L466.0 152.3 L466.0 152.3 L467.2 152.3 L467.2 152.3 L468.4 152.3 L468.4 152.3 L469.6 152.3 L469.6 152.3 L470.8 152.3 L470.8 152.3 L472.0 152.3 L472.0 152.3 L473.2 152.3 L473.2 152.3 L474.4 152.3 L474.4 152.3 L475.6 152.3 L475.6 152.3 L476.8 152.3 L476.8 152.3 L478.0 152.3 L478.0 152.3 L479.2 152.3 L479.2 152.3 L480.4 152.3 L480.4 152.3 L481.6 152.3 L481.6 152.3 L482.8 152.3 L482.8 152.3 L484.0 152.3 L484.0 152.3 L485.2 152.3 L485.2 152.3 L486.4 152.3 L486.4 152.3 L487.6 152.3 L487.6 152.3 L488.8 152.3 L488.8 152.3 L490.0 152.3 L490.0 152.3 L491.2 152.3 L491.2 152.3 L492.4 152.3 L492.4 152.3 L493.6 152.3 L493.6 152.3 L494.8 152.3 L494.8 152.3 L496.0 152.3 L496.0 152.3 L497.2 152.3 L497.2 152.3 L498.4 152.3 L498.4 152.3 L498.6 152.3 L498.6 155.5 L498.4 155.5 L498.4 156.2 L497.2 156.2 L497.2 155.5 L496.0 155.5 L496.0 155.5 L494.8 155.5 L494.8 155.5 L493.6 155.5 L493.6 155.5 L492.4 155.5 L492.4 155.5 L491.2 155.5 L491.2 156.2 L490.0 156.2 L490.0 155.5 L488.8 155.5 L488.8 155.5 L487.6 155.5 L487.6 155.5 L486.4 155.5 L486.4 155.5 L485.2 155.5 L485.2 155.5 L484.0 155.5 L484.0 155.5 L482.8 155.5 L482.8 155.5 L481.6 155.5 L481.6 155.5 L480.4 155.5 L480.4 156.8 L479.2 156.8 L479.2 157.3 L478.0 157.3 L478.0 157.3 L476.8 157.3 L476.8 155.5 L475.6 155.5 L475.6 155.5 L474.4 155.5 L474.4 155.5 L473.2 155.5 L473.2 155.5 L472.0 155.5 L472.0 155.5 L470.8 155.5 L470.8 155.5 L469.6 155.5 L469.6 157.3 L468.4 157.3 L468.4 155.5 L467.2 155.5 L467.2 155.5 L466.0 155.5 L466.0 155.5 L464.8 155.5 L464.8 155.5 L463.6 155.5 L463.6 158.1 L462.4 158.1 L462.4 156.2 L461.2 156.2 L461.2 157.3 L460.0 157.3 L460.0 156.8 L458.8 156.8 L458.8 155.5 L457.6 155.5 L457.6 155.5 L456.4 155.5 L456.4 156.8 L455.2 156.8 L455.2 157.3 L454.0 157.3 L454.0 155.5 L452.8 155.5 L452.8 155.5 L451.6 155.5 L451.6 156.2 L450.4 156.2 L450.4 156.8 L449.2 156.8 L449.2 155.5 L448.0 155.5 L448.0 158.1 L446.8 158.1 L446.8 155.5 L445.6 155.5 L445.6 155.5 L444.4 155.5 L444.4 156.2 L443.2 156.2 L443.2 155.5 L442.0 155.5 L442.0 158.1 L440.8 158.1 L440.8 156.8 L439.6 156.8 L439.6 156.8 L438.4 156.8 L438.4 155.5 L437.2 155.5 L437.2 157.3 L436.0 157.3 L436.0 155.5 L434.8 155.5 L434.8 158.1 L433.6 158.1 L433.6 158.1 L432.4 158.1Z M497.1 322.6 L498.3 322.6 L498.3 322.6 L499.5 322.6 L499.5 322.6 L500.7 322.6 L500.7 322.6 L501.9 322.6 L501.9 322.6 L503.1 322.6 L503.1 321.0 L504.3 321.0 L504.3 322.6 L505.5 322.6 L505.5 322.6 L506.7 322.6 L506.7 322.6 L507.9 322.6 L507.9 322.6 L509.1 322.6 L509.1 321.0 L510.3 321.0 L510.3 322.6 L511.5 322.6 L511.5 322.6 L512.7 322.6 L512.7 322.6 L513.9 322.6 L513.9 322.6 L515.1 322.6 L515.1 321.0 L516.4 321.0 L516.4 322.6 L517.6 322.6 L517.6 322.6 L518.8 322.6 L518.8 322.6 L520.0 322.6 L520.0 321.8 L521.2 321.8 L521.2 322.6 L522.4 322.6 L522.4 322.6 L523.6 322.6 L523.6 321.8 L524.8 321.8 L524.8 322.6 L526.0 322.6 L526.0 322.6 L527.2 322.6 L527.2 322.6 L528.4 322.6 L528.4 322.6 L529.6 322.6 L529.6 322.6 L530.8 322.6 L530.8 322.6 L532.0 322.6 L532.0 321.8 L533.2 321.8 L533.2 322.6 L534.4 322.6 L534.4 322.6 L535.6 322.6 L535.6 321.0 L536.8 321.0 L536.8 322.6 L538.0 322.6 L538.0 322.6 L539.2 322.6 L539.2 321.8 L540.4 321.8 L540.4 322.6 L541.6 322.6 L541.6 322.6 L542.8 322.6 L542.8 322.6 L544.0 322.6 L544.0 321.0 L545.2 321.0 L545.2 322.6 L546.4 322.6 L546.4 322.6 L547.6 322.6 L547.6 322.6 L548.8 322.6 L548.8 321.0 L550.0 321.0 L550.0 321.0 L551.2 321.0 L551.2 322.6 L552.4 322.6 L552.4 321.8 L553.6 321.8 L553.6 321.0 L554.8 321.0 L554.8 322.6 L556.0 322.6 L556.0 322.6 L556.0 322.6 L556.0 325.1 L556.0 325.1 L556.0 325.8 L554.8 325.8 L554.8 325.8 L553.6 325.8 L553.6 327.8 L552.4 327.8 L552.4 325.1 L551.2 325.1 L551.2 325.1 L550.0 325.1 L550.0 325.9 L548.8 325.9 L548.8 327.0 L547.6 327.0 L547.6 325.1 L546.4 325.1 L546.4 325.1 L545.2 325.1 L545.2 325.1 L544.0 325.1 L544.0 325.1 L542.8 325.1 L542.8 325.8 L541.6 325.8 L541.6 325.1 L540.4 325.1 L540.4 325.1 L539.2 325.1 L539.2 325.1 L538.0 325.1 L538.0 325.1 L536.8 325.1 L536.8 326.4 L535.6 326.4 L535.6 325.1 L534.4 325.1 L534.4 326.4 L533.2 326.4 L533.2 325.8 L532.0 325.8 L532.0 327.0 L530.8 327.0 L530.8 325.1 L529.6 325.1 L529.6 327.0 L528.4 327.0 L528.4 325.8 L527.2 325.8 L527.2 326.4 L526.0 326.4 L526.0 325.8 L524.8 325.8 L524.8 325.1 L523.6 325.1 L523.6 325.1 L522.4 325.1 L522.4 325.1 L521.2 325.1 L521.2 325.8 L520.0 325.8 L520.0 325.1 L518.8 325.1 L518.8 327.8 L517.6 327.8 L517.6 327.8 L516.4 327.8 L516.4 325.1 L515.1 325.1 L515.1 325.1 L513.9 325.1 L513.9 325.1 L512.7 325.1 L512.7 325.1 L511.5 325.1 L511.5 325.1 L510.3 325.1 L510.3 325.1 L509.1 325.1 L509.1 326.4 L507.9 326.4 L507.9 325.1 L506.7 325.1 L506.7 326.4 L505.5 326.4 L505.5 326.4 L504.3 326.4 L504.3 325.1 L503.1 325.1 L503.1 325.1 L501.9 325.1 L501.9 325.1 L500.7 325.1 L500.7 327.8 L499.5 327.8 L499.5 325.1 L498.3 325.1 L498.3 327.8 L497.1 327.8Z M555.8 152.3 L557.0 152.3 L557.0 152.3 L558.2 152.3 L558.2 152.3 L559.4 152.3 L559.4 152.3 L560.6 152.3 L560.6 152.3 L561.8 152.3 L561.8 152.3 L563.0 152.3 L563.0 152.3 L564.2 152.3 L564.2 152.3 L565.4 152.3 L565.4 152.3 L566.6 152.3 L566.6 152.3 L567.8 152.3 L567.8 152.3 L569.0 152.3 L569.0 152.3 L570.2 152.3 L570.2 152.3 L571.4 152.3 L571.4 152.3 L572.6 152.3 L572.6 152.3 L573.8 152.3 L573.8 152.3 L575.0 152.3 L575.0 152.3 L576.2 152.3 L576.2 152.3 L577.4 152.3 L577.4 152.3 L578.6 152.3 L578.6 152.3 L579.8 152.3 L579.8 152.3 L581.0 152.3 L581.0 152.3 L582.2 152.3 L582.2 152.3 L583.4 152.3 L583.4 152.3 L584.6 152.3 L584.6 152.3 L585.8 152.3 L585.8 152.3 L587.0 152.3 L587.0 152.3 L588.2 152.3 L588.2 152.3 L589.4 152.3 L589.4 152.3 L590.6 152.3 L590.6 152.3 L591.8 152.3 L591.8 152.3 L593.0 152.3 L593.0 152.3 L594.2 152.3 L594.2 152.3 L595.4 152.3 L595.4 152.3 L596.6 152.3 L596.6 152.3 L597.8 152.3 L597.8 152.3 L599.0 152.3 L599.0 152.3 L600.2 152.3 L600.2 152.3 L601.4 152.3 L601.4 152.3 L602.6 152.3 L602.6 152.3 L603.8 152.3 L603.8 152.3 L605.0 152.3 L605.0 152.3 L606.2 152.3 L606.2 152.3 L607.4 152.3 L607.4 152.3 L608.6 152.3 L608.6 152.3 L609.8 152.3 L609.8 152.3 L611.0 152.3 L611.0 152.3 L612.2 152.3 L612.2 152.3 L613.4 152.3 L613.4 152.3 L614.6 152.3 L614.6 152.3 L615.8 152.3 L615.8 152.3 L617.0 152.3 L617.0 152.3 L618.2 152.3 L618.2 152.3 L619.4 152.3 L619.4 152.3 L620.6 152.3 L620.6 152.3 L621.8 152.3 L621.8 152.3 L622.0 152.3 L622.0 155.5 L621.8 155.5 L621.8 155.5 L620.6 155.5 L620.6 157.3 L619.4 157.3 L619.4 158.1 L618.2 158.1 L618.2 155.5 L617.0 155.5 L617.0 157.3 L615.8 157.3 L615.8 155.5 L614.6 155.5 L614.6 156.3 L613.4 156.3 L613.4 156.2 L612.2 156.2 L612.2 155.5 L611.0 155.5 L611.0 156.3 L609.8 156.3 L609.8 155.5 L608.6 155.5 L608.6 156.2 L607.4 156.2 L607.4 156.3 L606.2 156.3 L606.2 156.3 L605.0 156.3 L605.0 156.8 L603.8 156.8 L603.8 156.2 L602.6 156.2 L602.6 156.2 L601.4 156.2 L601.4 156.8 L600.2 156.8 L600.2 158.1 L599.0 158.1 L599.0 155.5 L597.8 155.5 L597.8 156.8 L596.6 156.8 L596.6 156.2 L595.4 156.2 L595.4 155.5 L594.2 155.5 L594.2 157.3 L593.0 157.3 L593.0 157.3 L591.8 157.3 L591.8 158.1 L590.6 158.1 L590.6 155.5 L589.4 155.5 L589.4 156.2 L588.2 156.2 L588.2 155.5 L587.0 155.5 L587.0 155.5 L585.8 155.5 L585.8 156.2 L584.6 156.2 L584.6 155.5 L583.4 155.5 L583.4 155.5 L582.2 155.5 L582.2 156.2 L581.0 156.2 L581.0 156.2 L579.8 156.2 L579.8 158.1 L578.6 158.1 L578.6 155.5 L577.4 155.5 L577.4 158.1 L576.2 158.1 L576.2 155.5 L575.0 155.5 L575.0 155.5 L573.8 155.5 L573.8 156.2 L572.6 156.2 L572.6 155.5 L571.4 155.5 L571.4 156.3 L570.2 156.3 L570.2 156.8 L569.0 156.8 L569.0 155.5 L567.8 155.5 L567.8 157.3 L566.6 157.3 L566.6 155.5 L565.4 155.5 L565.4 155.5 L564.2 155.5 L564.2 155.5 L563.0 155.5 L563.0 156.3 L561.8 156.3 L561.8 155.5 L560.6 155.5 L560.6 155.5 L559.4 155.5 L559.4 155.5 L558.2 155.5 L558.2 157.3 L557.0 157.3 L557.0 155.5 L555.8 155.5Z M620.5 322.6 L621.7 322.6 L621.7 321.8 L622.9 321.8 L622.9 321.0 L624.1 321.0 L624.1 322.6 L625.3 322.6 L625.3 322.6 L626.5 322.6 L626.5 322.6 L627.7 322.6 L627.7 322.6 L628.9 322.6 L628.9 322.6 L630.1 322.6 L630.1 322.6 L631.3 322.6 L631.3 322.6 L632.5 322.6 L632.5 322.6 L633.7 322.6 L633.7 322.6 L634.9 322.6 L634.9 322.6 L636.1 322.6 L636.1 322.6 L637.3 322.6 L637.3 322.6 L638.5 322.6 L638.5 321.0 L639.7 321.0 L639.7 322.6 L640.9 322.6 L640.9 321.0 L642.1 321.0 L642.1 322.6 L643.3 322.6 L643.3 321.0 L644.5 321.0 L644.5 322.6 L645.7 322.6 L645.7 322.6 L646.9 322.6 L646.9 322.6 L648.1 322.6 L648.1 321.0 L649.3 321.0 L649.3 322.6 L650.5 322.6 L650.5 322.6 L651.7 322.6 L651.7 322.6 L652.9 322.6 L652.9 322.6 L654.1 322.6 L654.1 322.6 L655.3 322.6 L655.3 322.6 L656.5 322.6 L656.5 322.6 L657.7 322.6 L657.7 322.6 L658.9 322.6 L658.9 322.6 L660.1 322.6 L660.1 322.6 L661.3 322.6 L661.3 322.6 L662.5 322.6 L662.5 322.6 L663.7 322.6 L663.7 321.0 L664.9 321.0 L664.9 321.0 L666.1 321.0 L666.1 322.6 L667.3 322.6 L667.3 321.0 L668.5 321.0 L668.5 321.0 L669.7 321.0 L669.7 322.6 L670.9 322.6 L670.9 322.6 L672.1 322.6 L672.1 322.6 L673.3 322.6 L673.3 322.6 L674.5 322.6 L674.5 322.6 L675.7 322.6 L675.7 322.6 L676.9 322.6 L676.9 322.6 L678.1 322.6 L678.1 322.6 L679.3 322.6 L679.3 322.6 L679.3 322.6 L679.3 325.8 L679.3 325.8 L679.3 325.1 L678.1 325.1 L678.1 325.1 L676.9 325.1 L676.9 325.9 L675.7 325.9 L675.7 327.8 L674.5 327.8 L674.5 325.1 L673.3 325.1 L673.3 325.9 L672.1 325.9 L672.1 327.0 L670.9 327.0 L670.9 327.0 L669.7 327.0 L669.7 325.1 L668.5 325.1 L668.5 325.1 L667.3 325.1 L667.3 325.1 L666.1 325.1 L666.1 325.1 L664.9 325.1 L664.9 327.0 L663.7 327.0 L663.7 325.1 L662.5 325.1 L662.5 325.1 L661.3 325.1 L661.3 325.1 L660.1 325.1 L660.1 325.1 L658.9 325.1 L658.9 326.4 L657.7 326.4 L657.7 327.0 L656.5 327.0 L656.5 325.1 L655.3 325.1 L655.3 325.1 L654.1 325.1 L654.1 325.1 L652.9 325.1 L652.9 325.9 L651.7 325.9 L651.7 327.0 L650.5 327.0 L650.5 326.4 L649.3 326.4 L649.3 325.1 L648.1 325.1 L648.1 325.1 L646.9 325.1 L646.9 325.1 L645.7 325.1 L645.7 325.8 L644.5 325.8 L644.5 325.1 L643.3 325.1 L643.3 325.1 L642.1 325.1 L642.1 325.8 L640.9 325.8 L640.9 325.1 L639.7 325.1 L639.7 325.8 L638.5 325.8 L638.5 327.0 L637.3 327.0 L637.3 325.1 L636.1 325.1 L636.1 326.4 L634.9 326.4 L634.9 325.1 L633.7 325.1 L633.7 325.1 L632.5 325.1 L632.5 325.1 L631.3 325.1 L631.3 325.1 L630.1 325.1 L630.1 325.1 L628.9 325.1 L628.9 325.1 L627.7 325.1 L627.7 327.8 L626.5 327.8 L626.5 325.1 L625.3 325.1 L625.3 325.1 L624.1 325.1 L624.1 325.1 L622.9 325.1 L622.9 327.0 L621.7 327.0 L621.7 325.1 L620.5 325.1Z M679.1 152.3 L680.4 152.3 L680.4 152.3 L681.6 152.3 L681.6 152.3 L682.8 152.3 L682.8 152.3 L684.0 152.3 L684.0 152.3 L685.2 152.3 L685.2 152.3 L686.4 152.3 L686.4 152.3 L687.6 152.3 L687.6 152.3 L688.8 152.3 L688.8 152.3 L690.0 152.3 L690.0 152.3 L691.2 152.3 L691.2 152.3 L692.4 152.3 L692.4 152.3 L693.6 152.3 L693.6 152.3 L694.8 152.3 L694.8 152.3 L696.0 152.3 L696.0 152.3 L697.2 152.3 L697.2 152.3 L698.4 152.3 L698.4 152.3 L699.6 152.3 L699.6 152.3 L700.8 152.3 L700.8 152.3 L702.0 152.3 L702.0 152.3 L703.2 152.3 L703.2 152.3 L704.4 152.3 L704.4 152.3 L705.6 152.3 L705.6 152.3 L706.8 152.3 L706.8 152.3 L708.0 152.3 L708.0 152.3 L709.2 152.3 L709.2 152.3 L710.4 152.3 L710.4 152.3 L711.6 152.3 L711.6 152.3 L712.8 152.3 L712.8 152.3 L714.0 152.3 L714.0 152.3 L715.2 152.3 L715.2 152.3 L716.4 152.3 L716.4 152.3 L717.6 152.3 L717.6 152.3 L718.8 152.3 L718.8 152.3 L720.0 152.3 L720.0 152.3 L721.2 152.3 L721.2 152.3 L722.4 152.3 L722.4 152.3 L723.6 152.3 L723.6 152.3 L724.8 152.3 L724.8 152.3 L726.0 152.3 L726.0 152.3 L727.2 152.3 L727.2 152.3 L728.4 152.3 L728.4 152.3 L729.6 152.3 L729.6 152.3 L730.8 152.3 L730.8 152.3 L732.0 152.3 L732.0 152.3 L733.2 152.3 L733.2 152.3 L734.4 152.3 L734.4 152.3 L735.6 152.3 L735.6 152.3 L736.8 152.3 L736.8 152.3 L738.0 152.3 L738.0 152.3 L739.2 152.3 L739.2 152.3 L740.4 152.3 L740.4 152.3 L741.6 152.3 L741.6 152.3 L742.8 152.3 L742.8 152.3 L744.0 152.3 L744.0 152.3 L745.2 152.3 L745.2 152.3 L745.3 152.3 L745.3 158.1 L745.2 158.1 L745.2 156.2 L744.0 156.2 L744.0 156.8 L742.8 156.8 L742.8 155.5 L741.6 155.5 L741.6 155.5 L740.4 155.5 L740.4 155.5 L739.2 155.5 L739.2 156.3 L738.0 156.3 L738.0 156.8 L736.8 156.8 L736.8 155.5 L735.6 155.5 L735.6 155.5 L734.4 155.5 L734.4 155.5 L733.2 155.5 L733.2 155.5 L732.0 155.5 L732.0 157.3 L730.8 157.3 L730.8 155.5 L729.6 155.5 L729.6 156.8 L728.4 156.8 L728.4 158.1 L727.2 158.1 L727.2 155.5 L726.0 155.5 L726.0 155.5 L724.8 155.5 L724.8 156.3 L723.6 156.3 L723.6 156.2 L722.4 156.2 L722.4 155.5 L721.2 155.5 L721.2 156.8 L720.0 156.8 L720.0 155.5 L718.8 155.5 L718.8 156.2 L717.6 156.2 L717.6 155.5 L716.4 155.5 L716.4 155.5 L715.2 155.5 L715.2 155.5 L714.0 155.5 L714.0 155.5 L712.8 155.5 L712.8 155.5 L711.6 155.5 L711.6 156.2 L710.4 156.2 L710.4 155.5 L709.2 155.5 L709.2 155.5 L708.0 155.5 L708.0 156.3 L706.8 156.3 L706.8 155.5 L705.6 155.5 L705.6 156.2 L704.4 156.2 L704.4 156.2 L703.2 156.2 L703.2 156.2 L702.0 156.2 L702.0 156.8 L700.8 156.8 L700.8 156.8 L699.6 156.8 L699.6 156.8 L698.4 156.8 L698.4 156.8 L697.2 156.8 L697.2 155.5 L696.0 155.5 L696.0 157.3 L694.8 157.3 L694.8 155.5 L693.6 155.5 L693.6 158.1 L692.4 158.1 L692.4 155.5 L691.2 155.5 L691.2 155.5 L690.0 155.5 L690.0 158.1 L688.8 158.1 L688.8 155.5 L687.6 155.5 L687.6 155.5 L686.4 155.5 L686.4 156.8 L685.2 156.8 L685.2 155.5 L684.0 155.5 L684.0 155.5 L682.8 155.5 L682.8 155.5 L681.6 155.5 L681.6 158.1 L680.4 158.1 L680.4 155.5 L679.1 155.5Z M743.8 321.8 L745.0 321.8 L745.0 322.6 L746.2 322.6 L746.2 322.6 L747.5 322.6 L747.5 321.8 L748.7 321.8 L748.7 321.8 L749.9 321.8 L749.9 322.6 L751.1 322.6 L751.1 322.6 L752.3 322.6 L752.3 322.6 L753.5 322.6 L753.5 322.6 L754.7 322.6 L754.7 322.6 L755.9 322.6 L755.9 322.6 L757.1 322.6 L757.1 322.6 L758.3 322.6 L758.3 322.6 L759.5 322.6 L759.5 322.6 L760.7 322.6 L760.7 322.6 L761.9 322.6 L761.9 322.6 L763.1 322.6 L763.1 322.6 L764.3 322.6 L764.3 322.6 L765.5 322.6 L765.5 322.6 L766.7 322.6 L766.7 322.6 L767.9 322.6 L767.9 322.6 L769.1 322.6 L769.1 322.6 L770.3 322.6 L770.3 321.8 L771.5 321.8 L771.5 322.6 L772.7 322.6 L772.7 322.6 L773.9 322.6 L773.9 322.6 L775.1 322.6 L775.1 321.8 L776.3 321.8 L776.3 322.6 L777.5 322.6 L777.5 322.6 L778.7 322.6 L778.7 321.8 L779.9 321.8 L779.9 322.6 L781.1 322.6 L781.1 322.6 L782.3 322.6 L782.3 322.6 L783.5 322.6 L783.5 322.6 L784.7 322.6 L784.7 321.0 L785.9 321.0 L785.9 322.6 L787.1 322.6 L787.1 322.6 L788.3 322.6 L788.3 322.6 L789.5 322.6 L789.5 322.6 L790.7 322.6 L790.7 322.6 L791.9 322.6 L791.9 322.6 L793.1 322.6 L793.1 322.6 L794.3 322.6 L794.3 322.6 L795.5 322.6 L795.5 322.6 L796.7 322.6 L796.7 322.6 L797.9 322.6 L797.9 322.6 L799.1 322.6 L799.1 322.6 L800.3 322.6 L800.3 322.6 L801.5 322.6 L801.5 322.6 L802.7 322.6 L802.7 321.8 L802.7 321.8 L802.7 325.1 L802.7 325.1 L802.7 325.1 L801.5 325.1 L801.5 325.8 L800.3 325.8 L800.3 325.1 L799.1 325.1 L799.1 325.1 L797.9 325.1 L797.9 325.1 L796.7 325.1 L796.7 325.1 L795.5 325.1 L795.5 325.9 L794.3 325.9 L794.3 327.8 L793.1 327.8 L793.1 325.9 L791.9 325.9 L791.9 325.9 L790.7 325.9 L790.7 325.1 L789.5 325.1 L789.5 327.0 L788.3 327.0 L788.3 325.1 L787.1 325.1 L787.1 325.9 L785.9 325.9 L785.9 325.1 L784.7 325.1 L784.7 325.1 L783.5 325.1 L783.5 326.4 L782.3 326.4 L782.3 327.8 L781.1 327.8 L781.1 325.1 L779.9 325.1 L779.9 325.1 L778.7 325.1 L778.7 325.1 L777.5 325.1 L777.5 325.1 L776.3 325.1 L776.3 325.1 L775.1 325.1 L775.1 327.0 L773.9 327.0 L773.9 325.9 L772.7 325.9 L772.7 325.1 L771.5 325.1 L771.5 325.1 L770.3 325.1 L770.3 325.1 L769.1 325.1 L769.1 325.1 L767.9 325.1 L767.9 327.8 L766.7 327.8 L766.7 325.9 L765.5 325.9 L765.5 325.1 L764.3 325.1 L764.3 325.1 L763.1 325.1 L763.1 325.1 L761.9 325.1 L761.9 325.8 L760.7 325.8 L760.7 325.1 L759.5 325.1 L759.5 325.1 L758.3 325.1 L758.3 325.1 L757.1 325.1 L757.1 325.1 L755.9 325.1 L755.9 326.4 L754.7 326.4 L754.7 325.1 L753.5 325.1 L753.5 325.1 L752.3 325.1 L752.3 325.1 L751.1 325.1 L751.1 325.1 L749.9 325.1 L749.9 325.1 L748.7 325.1 L748.7 325.1 L747.5 325.1 L747.5 325.1 L746.2 325.1 L746.2 325.1 L745.0 325.1 L745.0 327.8 L743.8 327.8Z M802.5 152.3 L803.7 152.3 L803.7 152.3 L804.9 152.3 L804.9 152.3 L806.1 152.3 L806.1 152.3 L807.3 152.3 L807.3 152.3 L808.5 152.3 L808.5 152.3 L809.7 152.3 L809.7 152.3 L810.9 152.3 L810.9 152.3 L812.1 152.3 L812.1 152.3 L813.3 152.3 L813.3 152.3 L814.5 152.3 L814.5 152.3 L815.7 152.3 L815.7 152.3 L816.9 152.3 L816.9 152.3 L818.1 152.3 L818.1 152.3 L819.3 152.3 L819.3 152.3 L820.5 152.3 L820.5 152.3 L821.7 152.3 L821.7 152.3 L822.9 152.3 L822.9 152.3 L824.1 152.3 L824.1 152.3 L825.3 152.3 L825.3 152.3 L826.5 152.3 L826.5 152.3 L827.7 152.3 L827.7 152.3 L828.9 152.3 L828.9 152.3 L830.1 152.3 L830.1 152.3 L831.3 152.3 L831.3 152.3 L832.5 152.3 L832.5 152.3 L833.7 152.3 L833.7 152.3 L834.9 152.3 L834.9 152.3 L836.1 152.3 L836.1 152.3 L837.3 152.3 L837.3 152.3 L838.5 152.3 L838.5 152.3 L839.7 152.3 L839.7 152.3 L840.9 152.3 L840.9 152.3 L842.1 152.3 L842.1 152.3 L843.3 152.3 L843.3 152.3 L844.5 152.3 L844.5 152.3 L845.7 152.3 L845.7 152.3 L846.9 152.3 L846.9 152.3 L848.1 152.3 L848.1 152.3 L849.3 152.3 L849.3 152.3 L850.5 152.3 L850.5 152.3 L851.7 152.3 L851.7 152.3 L852.9 152.3 L852.9 152.3 L854.1 152.3 L854.1 152.3 L855.3 152.3 L855.3 152.3 L856.5 152.3 L856.5 152.3 L857.7 152.3 L857.7 152.3 L858.9 152.3 L858.9 152.3 L860.1 152.3 L860.1 152.3 L861.3 152.3 L861.3 152.3 L862.5 152.3 L862.5 152.3 L863.7 152.3 L863.7 152.3 L864.9 152.3 L864.9 152.3 L866.1 152.3 L866.1 152.3 L867.3 152.3 L867.3 152.3 L868.5 152.3 L868.5 152.3 L868.7 152.3 L868.7 156.8 L868.5 156.8 L868.5 157.3 L867.3 157.3 L867.3 155.5 L866.1 155.5 L866.1 158.1 L864.9 158.1 L864.9 155.5 L863.7 155.5 L863.7 155.5 L862.5 155.5 L862.5 156.8 L861.3 156.8 L861.3 155.5 L860.1 155.5 L860.1 155.5 L858.9 155.5 L858.9 155.5 L857.7 155.5 L857.7 155.5 L856.5 155.5 L856.5 156.2 L855.3 156.2 L855.3 155.5 L854.1 155.5 L854.1 156.2 L852.9 156.2 L852.9 156.3 L851.7 156.3 L851.7 156.3 L850.5 156.3 L850.5 158.1 L849.3 158.1 L849.3 156.8 L848.1 156.8 L848.1 158.1 L846.9 158.1 L846.9 156.3 L845.7 156.3 L845.7 155.5 L844.5 155.5 L844.5 156.3 L843.3 156.3 L843.3 155.5 L842.1 155.5 L842.1 155.5 L840.9 155.5 L840.9 158.1 L839.7 158.1 L839.7 156.2 L838.5 156.2 L838.5 156.3 L837.3 156.3 L837.3 155.5 L836.1 155.5 L836.1 155.5 L834.9 155.5 L834.9 155.5 L833.7 155.5 L833.7 155.5 L832.5 155.5 L832.5 157.3 L831.3 157.3 L831.3 155.5 L830.1 155.5 L830.1 155.5 L828.9 155.5 L828.9 155.5 L827.7 155.5 L827.7 155.5 L826.5 155.5 L826.5 155.5 L825.3 155.5 L825.3 155.5 L824.1 155.5 L824.1 155.5 L822.9 155.5 L822.9 155.5 L821.7 155.5 L821.7 158.1 L820.5 158.1 L820.5 158.1 L819.3 158.1 L819.3 158.1 L818.1 158.1 L818.1 158.1 L816.9 158.1 L816.9 156.3 L815.7 156.3 L815.7 155.5 L814.5 155.5 L814.5 158.1 L813.3 158.1 L813.3 158.1 L812.1 158.1 L812.1 155.5 L810.9 155.5 L810.9 156.2 L809.7 156.2 L809.7 156.8 L808.5 156.8 L808.5 155.5 L807.3 155.5 L807.3 155.5 L806.1 155.5 L806.1 156.3 L804.9 156.3 L804.9 155.5 L803.7 155.5 L803.7 155.5 L802.5 155.5Z M867.2 321.8 L868.4 321.8 L868.4 322.6 L869.6 322.6 L869.6 322.6 L870.8 322.6 L870.8 322.6 L872.0 322.6 L872.0 322.6 L873.2 322.6 L873.2 322.6 L874.4 322.6 L874.4 322.6 L875.6 322.6 L875.6 322.6 L876.8 322.6 L876.8 322.6 L878.0 322.6 L878.0 322.6 L879.2 322.6 L879.2 321.8 L880.4 321.8 L880.4 322.6 L881.6 322.6 L881.6 322.6 L882.8 322.6 L882.8 322.6 L884.0 322.6 L884.0 322.6 L885.2 322.6 L885.2 322.6 L886.4 322.6 L886.4 322.6 L887.6 322.6 L887.6 322.6 L888.8 322.6 L888.8 322.6 L890.0 322.6 L890.0 321.8 L891.2 321.8 L891.2 322.6 L892.4 322.6 L892.4 321.0 L893.6 321.0 L893.6 322.6 L894.8 322.6 L894.8 322.6 L896.0 322.6 L896.0 322.6 L897.2 322.6 L897.2 322.6 L898.4 322.6 L898.4 322.6 L899.6 322.6 L899.6 321.8 L900.8 321.8 L900.8 321.8 L902.0 321.8 L902.0 322.6 L903.2 322.6 L903.2 322.6 L904.4 322.6 L904.4 322.6 L905.6 322.6 L905.6 322.6 L906.8 322.6 L906.8 321.0 L908.0 321.0 L908.0 322.6 L909.2 322.6 L909.2 322.6 L910.4 322.6 L910.4 322.6 L911.6 322.6 L911.6 322.6 L912.8 322.6 L912.8 322.6 L914.0 322.6 L914.0 322.6 L915.2 322.6 L915.2 322.6 L916.4 322.6 L916.4 322.6 L917.6 322.6 L917.6 321.8 L918.8 321.8 L918.8 322.6 L920.0 322.6 L920.0 322.6 L921.2 322.6 L921.2 322.6 L922.4 322.6 L922.4 321.0 L923.6 321.0 L923.6 322.6 L924.8 322.6 L924.8 322.6 L926.0 322.6 L926.0 321.8 L926.0 321.8 L926.0 325.1 L926.0 325.1 L926.0 325.1 L924.8 325.1 L924.8 325.1 L923.6 325.1 L923.6 325.8 L922.4 325.8 L922.4 325.1 L921.2 325.1 L921.2 327.8 L920.0 327.8 L920.0 325.1 L918.8 325.1 L918.8 325.1 L917.6 325.1 L917.6 325.1 L916.4 325.1 L916.4 325.1 L915.2 325.1 L915.2 325.1 L914.0 325.1 L914.0 325.1 L912.8 325.1 L912.8 325.1 L911.6 325.1 L911.6 327.8 L910.4 327.8 L910.4 327.0 L909.2 327.0 L909.2 325.1 L908.0 325.1 L908.0 325.1 L906.8 325.1 L906.8 325.9 L905.6 325.9 L905.6 325.8 L904.4 325.8 L904.4 325.9 L903.2 325.9 L903.2 325.9 L902.0 325.9 L902.0 325.8 L900.8 325.8 L900.8 325.1 L899.6 325.1 L899.6 325.1 L898.4 325.1 L898.4 325.1 L897.2 325.1 L897.2 325.1 L896.0 325.1 L896.0 325.1 L894.8 325.1 L894.8 325.1 L893.6 325.1 L893.6 325.8 L892.4 325.8 L892.4 325.1 L891.2 325.1 L891.2 325.1 L890.0 325.1 L890.0 325.1 L888.8 325.1 L888.8 325.1 L887.6 325.1 L887.6 326.4 L886.4 326.4 L886.4 325.8 L885.2 325.8 L885.2 327.0 L884.0 327.0 L884.0 327.0 L882.8 327.0 L882.8 325.1 L881.6 325.1 L881.6 325.1 L880.4 325.1 L880.4 326.4 L879.2 326.4 L879.2 326.4 L878.0 326.4 L878.0 327.0 L876.8 327.0 L876.8 325.1 L875.6 325.1 L875.6 327.8 L874.4 327.8 L874.4 325.1 L873.2 325.1 L873.2 325.1 L872.0 325.1 L872.0 325.1 L870.8 325.1 L870.8 326.4 L869.6 326.4 L869.6 327.0 L868.4 327.0 L868.4 325.1 L867.2 325.1Z M925.8 152.3 L927.0 152.3 L927.0 152.3 L928.2 152.3 L928.2 152.3 L929.5 152.3 L929.5 152.3 L930.7 152.3 L930.7 152.3 L931.9 152.3 L931.9 152.3 L933.1 152.3 L933.1 152.3 L934.3 152.3 L934.3 152.3 L934.3 152.3 L934.3 156.3 L934.3 156.3 L934.3 156.2 L933.1 156.2 L933.1 155.5 L931.9 155.5 L931.9 155.5 L930.7 155.5 L930.7 156.3 L929.5 156.3 L929.5 155.5 L928.2 155.5 L928.2 155.5 L927.0 155.5 L927.0 155.5 L925.8 155.5Z" fill="#e6e619"/><path d="M61.8 325.4L62.1 160.0L63.4 152.5 M127.8 152.5L128.0 325.4 M185.1 325.4L185.4 160.0L186.7 152.5 M251.1 152.5L251.3 325.4 M308.5 325.4L308.8 160.0L310.1 152.5 M374.5 152.5L374.7 325.4 M431.8 325.4L432.1 160.0L433.4 152.5 M497.8 152.5L498.0 325.4 M555.2 325.4L555.5 160.0L556.8 152.5 M621.2 152.5L621.4 325.4 M678.5 325.4L678.8 160.0L680.1 152.5 M744.5 152.5L744.8 325.4 M801.9 325.4L802.2 160.0L803.5 152.5 M867.9 152.5L868.1 325.4 M925.2 325.4L925.5 160.0L926.8 152.5" fill="none" stroke="#e6e619" stroke-width="1.45"/></svg>

<!-- top bar -->
<div class="t n" style="left:28.5px;top:3.6px;">AKTAKOM</div>
<div class="pill" style="left:144px;top:1px;width:96px;height:21.500px;background:#e40000;"></div>
<div class="t " style="left:168px;top:2.8px;color:#5a0000;">Stop</div>

<div class="pill" style="left:301px;top:1px;width:360.500px;height:22px;"></div>
<svg class="abs" style="left:300px;top:0" width="365" height="24" viewBox="300 0 365 24">
 <path d="M309 3.500h7.500M312.700 3.500v4.500" stroke="#e000e0" stroke-width="1.8" fill="none"/>
 <path d="M313 11.500H649" stroke="#c8c81e" stroke-width="1.4"/>
 <path d="M357 3.500h-2.300V21.500h2.300" stroke="#ddd" stroke-width="1.6" fill="none"/>
 <path d="M603 3.500h2.500V21.500h-2.500" stroke="#ddd" stroke-width="1.6" fill="none"/>
</svg>

<div class="pill" style="left:671px;top:1px;width:131px;height:22px;"></div>
<svg class="abs" style="left:675px;top:2px" width="18" height="21" viewBox="0 0 18 21">
 <path d="M2 2.500h13.500v12l-3.500 4.500h-6.500l-3.500-4.500z" fill="#100018" stroke="#a020d0" stroke-width="1.6"/>
 <text x="8.800" y="14.600" font-family="Liberation Sans, sans-serif" font-size="12.500" text-anchor="middle" fill="#d8a8f0">T</text>
</svg>
<div class="t w" style="left:694.5px;top:3.6px;">480.0ms</div>

<div class="pill" style="left:820px;top:1px;width:71px;height:22px;"></div>
<div class="t w" style="left:831px;top:3.3px;">9:13</div>

<svg class="abs" style="left:904px;top:2px" width="20" height="19" viewBox="904 2 20 19">
 <path d="M909.500 12L916.500 8 921.500 13.500 913 18.800Z" fill="#bca6c6"/>
 <path d="M912 11.500L916.500 9 920 12.800 914.500 15.600Z" fill="#2a4cb6"/>
 <path d="M907 5.500L911.500 3.800 916 4.500 916.500 8.500 911 12.800 907.500 10.500Z" fill="#22aa22"/>
 <path d="M908.500 6.500L911.500 5.500 913 7.500 910.500 9.500Z" fill="#58d83c"/>
</svg>

<!-- horizontal trigger position marker (clipped by plot edge) -->
<svg class="abs" style="left:24px;top:24px" width="12" height="20" viewBox="24 24 12 20">
 <path d="M15 26H33V37L24 43 15 37Z" fill="#08000c" stroke="#a428cc" stroke-width="1.8"/>
 <path d="M19.500 30H29.500M24.500 30V38" stroke="#a428cc" stroke-width="1.6" fill="none"/>
</svg>

<!-- channel marker -->
<svg class="abs" style="left:0;top:310px" width="26" height="28" viewBox="0 0 26 28">
 <path d="M0.500 3.500H17L22.500 14 17 24.500H0.500z" fill="#000" stroke="#e6e619" stroke-width="1.4"/>
 <text x="9.500" y="20" font-family="Liberation Sans, sans-serif" font-size="17" text-anchor="middle" fill="#e6e619">2</text>
</svg>
<!-- trigger arrow -->
<svg class="abs" style="left:934px;top:290px" width="24" height="24" viewBox="0 0 24 24">
 <path d="M3 12L18 5V19z" fill="#c018d8"/>
</svg>

<!-- bottom-left info -->
<div class="abs" style="left:0;top:623px;width:383px;height:97px;background:#54a8c6;"></div>
<div class="box" style="left:2px;top:624px;width:247.500px;height:23px;"></div>
<div class="box" style="left:2px;top:648px;width:247.500px;height:22.500px;"></div>
<div class="box" style="left:253.500px;top:624px;width:126.500px;height:46.500px;border-radius:6px;"></div>
<div class="box" style="left:2px;top:672.500px;width:378px;height:43px;border-radius:4px;"></div>

<div class="circ" style="left:3px;top:628px;background:#e40000;">1</div>
<div class="t r" style="left:22px;top:628.7px;">5V-</div>
<div class="t r" style="left:127px;top:628.2px;">0.00div</div>
<div class="circ" style="left:3px;top:651px;">2</div>
<div class="t y" style="left:22px;top:652px;">2V-</div>
<div class="t y" style="left:127px;top:652px;">0.00div</div>

<div class="t w" style="left:269.5px;top:626.6px;">(50KS/s)</div>
<div class="t w" style="left:261px;top:649.6px;">Depth:10K</div>

<div class="circ" style="left:2px;top:675px;">2</div>
<div class="t y" style="left:25px;top:674.7px;">F:48.61Hz</div>
<div class="circ" style="left:193px;top:675px;">2</div>
<div class="t y" style="left:217px;top:674.7px;">Vk:4.080v</div>
<div class="circ" style="left:2px;top:697.500px;">2</div>
<div class="t y" style="left:25px;top:697.4px;">+D:53.9%</div>
<div class="circ" style="left:193px;top:697.500px;">2</div>
<div class="t y" style="left:217px;top:697.4px;">Ma:5.760v</div>

<!-- time base -->
<div class="pill" style="left:383px;top:624px;width:119px;height:21.500px;"></div>
<div class="t w" style="left:404px;top:626.3px;">M:10ms</div>

<!-- trigger info -->
<div class="pill" style="left:799px;top:624px;width:154px;height:21.500px;"></div>
<div class="circ" style="left:800.500px;top:624.500px;width:20px;height:20px;line-height:20px;">2</div>
<svg class="abs" style="left:820px;top:624px" width="30" height="22" viewBox="820 624 30 22">
 <path d="M822 642.500H831.500L837.500 627H846" stroke="#e4e4e4" stroke-width="1.6" fill="none"/>
</svg>
<div class="t w" style="left:848px;top:627.3px;">720mV</div>

<!-- menu -->
<div class="abs" style="left:383px;top:646px;width:577px;height:74px;background:#0274cf;"></div>
<div class="abs" style="left:383px;top:646px;width:575px;height:71.500px;background:#0461a2;"></div>
<div class="btn" style="left:387px;top:649.500px;width:107px;height:66px;"></div>
<div class="t n" style="left:415px;top:659.3px;">Type</div>
<div class="abs" style="left:409.500px;top:685.500px;width:59.500px;height:23.500px;background:#e8e8e8;"></div>
<div class="t " style="left:410.5px;top:688.5px;color:#101010;">Image</div>
<div class="btn" style="left:717.500px;top:649.500px;width:105px;height:66px;"></div>
<div class="t n" style="left:744px;top:673.3px;">Save</div>
</div>
</body>
</html>
